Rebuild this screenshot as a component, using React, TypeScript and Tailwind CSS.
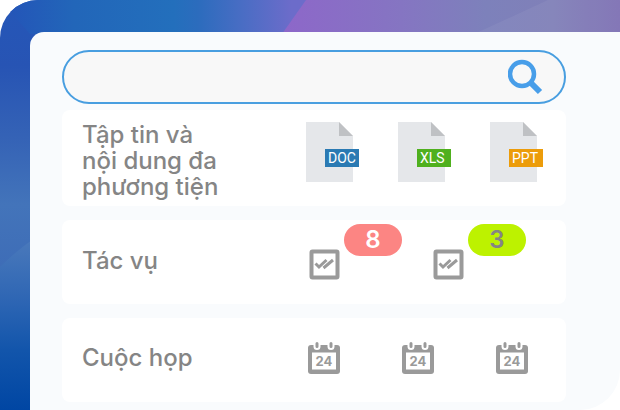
import type { ReactNode } from "react";

interface FileType {
  label: string;
  color: string;
}

const fileTypes: FileType[] = [
  { label: "DOC", color: "#2a7ab3" },
  { label: "XLS", color: "#4fb01e" },
  { label: "PPT", color: "#ec9c0a" },
];

const tasks = [
  { count: 8, label: "Tác vụ quá hạn", badge: "bg-[#fc8583] text-white" },
  { count: 3, label: "Tác vụ mới", badge: "bg-[#bdf200] text-[#858585]" },
];

const meetings = [1, 2, 3];

function Backdrop() {
  return (
    <svg
      className="absolute inset-0 h-full w-full"
      viewBox="0 0 620 410"
      preserveAspectRatio="none"
      aria-hidden="true"
    >
      <defs>
        <linearGradient id="side" gradientUnits="userSpaceOnUse" x1="0" y1="0" x2="0" y2="410">
          <stop offset="0" stopColor="#2557b8" />
          <stop offset="0.16" stopColor="#2754b4" />
          <stop offset="0.34" stopColor="#3563b6" />
          <stop offset="0.5" stopColor="#4374ba" />
          <stop offset="0.65" stopColor="#3e6db7" />
          <stop offset="1" stopColor="#3e6db7" />
        </linearGradient>
        <linearGradient id="wave" gradientUnits="userSpaceOnUse" x1="0" y1="240" x2="0" y2="410">
          <stop offset="0" stopColor="#4a79bb" />
          <stop offset="0.35" stopColor="#2e66b4" />
          <stop offset="0.65" stopColor="#1255ab" />
          <stop offset="1" stopColor="#0046a3" />
        </linearGradient>
        <linearGradient id="top" gradientUnits="userSpaceOnUse" x1="0" y1="0" x2="620" y2="0">
          <stop offset="0" stopColor="#2453b8" />
          <stop offset="0.12" stopColor="#2266b9" />
          <stop offset="0.28" stopColor="#236fbc" />
          <stop offset="0.32" stopColor="#2c6cbd" />
          <stop offset="0.39" stopColor="#496dc4" />
          <stop offset="0.47" stopColor="#6c6cca" />
          <stop offset="1" stopColor="#6c6cca" />
        </linearGradient>
        <linearGradient id="violet" gradientUnits="userSpaceOnUse" x1="284" y1="0" x2="620" y2="0">
          <stop offset="0" stopColor="#8d67c9" />
          <stop offset="0.35" stopColor="#8575c2" />
          <stop offset="0.6" stopColor="#7d81bb" />
          <stop offset="0.8" stopColor="#8080b8" />
          <stop offset="1" stopColor="#7e70b4" />
        </linearGradient>
      </defs>
      <rect width="60" height="410" fill="url(#side)" />
      <path d="M0 267Q16 251 32 240H60V410H0Z" fill="url(#wave)" />
      <path d="M0 0H620V34H30Z" fill="url(#top)" />
      <path d="M306 0H620V34H282Z" fill="url(#violet)" />
      <path d="M474 34L548 0H620V34Z" fill="#ffffff" opacity="0.05" />
    </svg>
  );
}

function SearchIcon() {
  return (
    <svg width="36" height="36" viewBox="0 0 36 36" fill="none" stroke="#489ee9" aria-hidden="true">
      <circle cx="14" cy="15" r="12" strokeWidth="4.500" />
      <path d="M22 23L32 33" strokeWidth="6" />
    </svg>
  );
}

function FileIcon({ label, color }: FileType) {
  return (
    <svg width="53" height="60" viewBox="0 0 53 60" role="img" aria-label={label}>
      <path d="M0 0H33L47 14V60H0Z" fill="#e5e7ea" />
      <path d="M33 0L47 14H33Z" fill="#bfc1c4" />
      <rect x="19" y="27" width="34" height="18" fill={color} />
      <text x="22" y="41" fontSize="14" fill="#ffffff" className="font-[Roboto,sans-serif]">
        {label}
      </text>
    </svg>
  );
}

function TaskIcon() {
  return (
    <svg width="31" height="31" viewBox="0 0 31 31" fill="none" stroke="#9a9a9a" aria-hidden="true">
      <rect x="2.500" y="2.500" width="26" height="26" rx="1" strokeWidth="4" />
      <path d="M6.500 14.500L10 18L17.500 11M14.500 19L24 11" strokeWidth="3" />
    </svg>
  );
}

function CalendarIcon() {
  return (
    <svg width="32" height="32" viewBox="0 0 32 32" aria-hidden="true">
      <rect y="3" width="32" height="29" rx="3" fill="#9a9a9a" />
      <rect x="4" y="10.500" width="24" height="17" fill="#ffffff" />
      <g fill="#9a9a9a" stroke="#ffffff" strokeWidth="2">
        <rect x="6.500" y="-1" width="5" height="8" rx="2.500" />
        <rect x="20.500" y="-1" width="5" height="8" rx="2.500" />
      </g>
      <text x="16" y="24" textAnchor="middle" fontSize="13" fontWeight="700" fill="#9a9a9a">
        24
      </text>
    </svg>
  );
}

function Row({ title, className, children }: { title: string; className: string; children: ReactNode }) {
  return (
    <section className={`flex rounded-lg bg-white pl-5 ${className}`}>
      <h2 className="w-[224px] shrink-0 pr-20 text-2xl leading-[26px] font-medium text-[#858585]">
        {title}
      </h2>
      {children}
    </section>
  );
}

export default function App() {
  return (
    <main className="relative overflow-hidden rounded-tl-[38px] rounded-br-[40px] pt-8 pl-[30px] font-['Inter','Noto_Sans',sans-serif]">
      <Backdrop />
      <div className="relative rounded-tl-[14px] bg-[#f9fbfd] pt-[18px] pr-[54px] pb-2 pl-8">
        <form role="search" className="flex h-[54px] items-center rounded-full border-2 border-[#489ee0] bg-[#f8f8f8] pr-5 pl-6">
          <input type="search" aria-label="Tìm kiếm" className="min-w-0 flex-1 bg-transparent text-lg outline-none" />
          <button type="button" aria-label="Tìm">
            <SearchIcon />
          </button>
        </form>

        <div className="mt-1.5 flex flex-col gap-3.5">
          <Row title="Tập tin và nội dung đa phương tiện" className="items-start pt-3 pb-1.5">
            <div className="flex gap-[39px]">
              {fileTypes.map((file) => (
                <FileIcon key={file.label} {...file} />
              ))}
            </div>
          </Row>

          <Row title="Tác vụ" className="h-[84px] items-center pb-0.5">
            <ul className="flex gap-[31px] self-start pt-1 pl-[3px]">
              {tasks.map((task) => (
                <li key={task.count} className="flex items-start gap-1" aria-label={task.label}>
                  <span className="pt-[25px]">
                    <TaskIcon />
                  </span>
                  <span className={`h-8 w-[58px] rounded-full text-center text-2xl font-semibold ${task.badge}`}>
                    {task.count}
                  </span>
                </li>
              ))}
            </ul>
          </Row>

          <Row title="Cuộc họp" className="h-[84px] items-center pb-1">
            <div className="flex gap-[62px] pl-0.5">
              {meetings.map((id) => (
                <CalendarIcon key={id} />
              ))}
            </div>
          </Row>
        </div>
      </div>
    </main>
  );
}
